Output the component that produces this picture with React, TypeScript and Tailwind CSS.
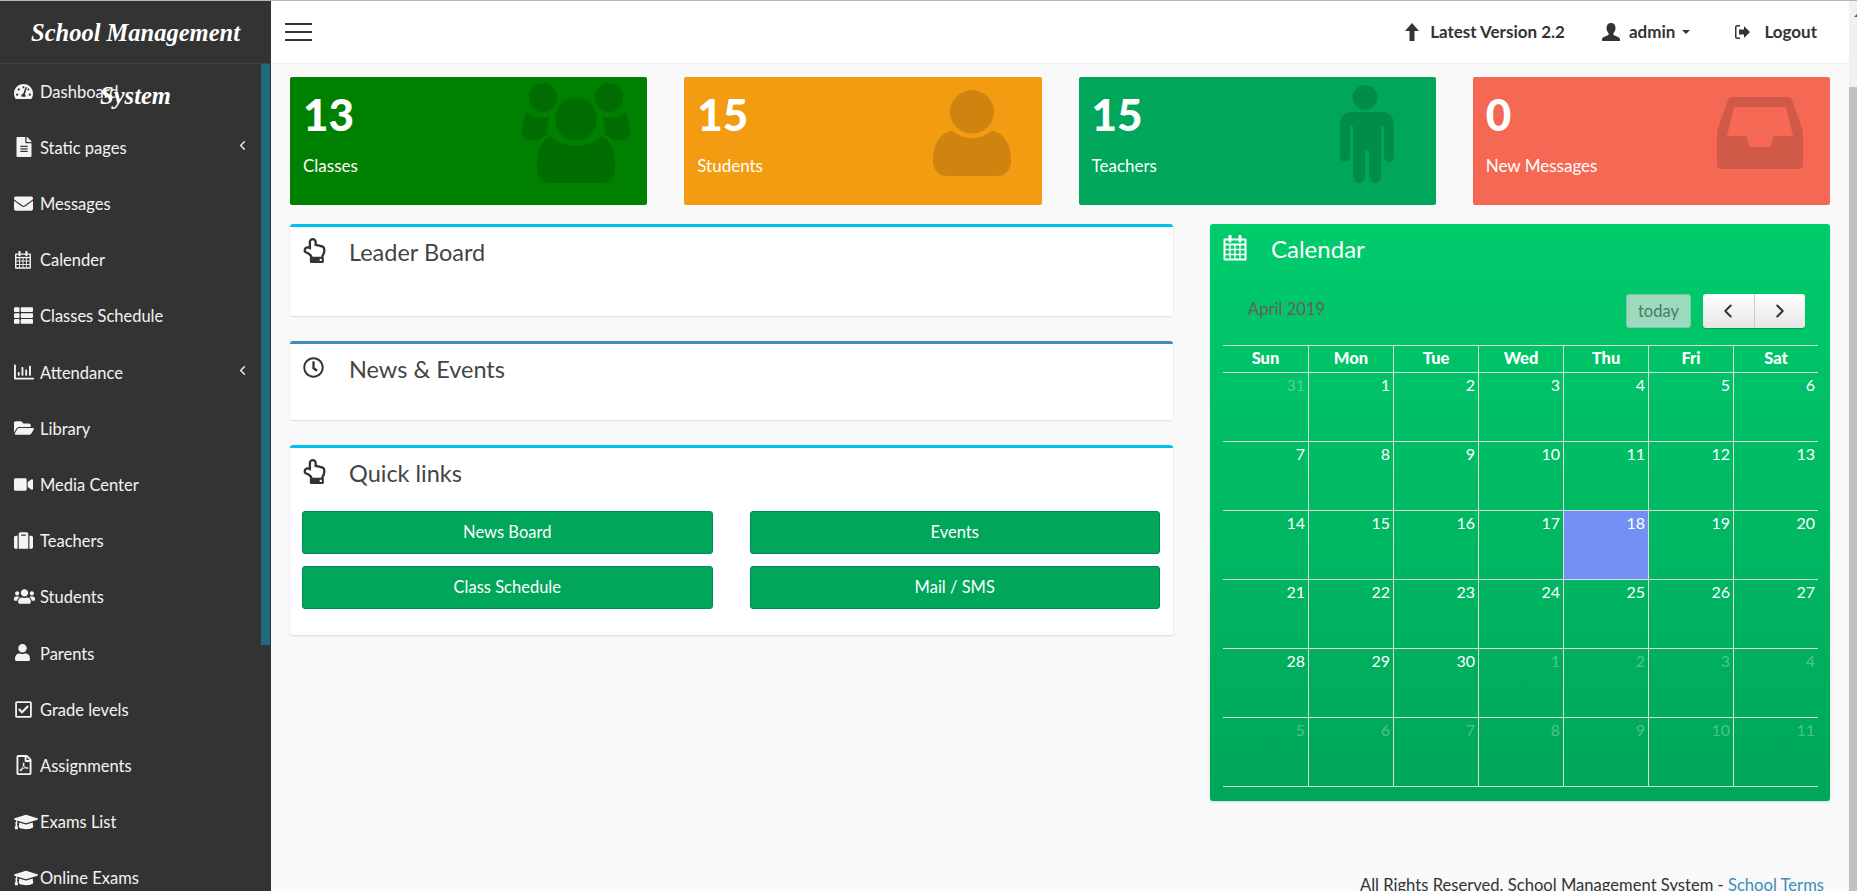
import {
  FaTachometerAlt,
  FaFileAlt,
  FaEnvelope,
  FaThList,
  FaRegChartBar,
  FaFolderOpen,
  FaVideo,
  FaSuitcase,
  FaUsers,
  FaUser,
  FaRegCheckSquare,
  FaRegFilePdf,
  FaGraduationCap,
  FaRegHandPointUp,
  FaRegClock,
} from "react-icons/fa";
import { ChevronLeft, ChevronRight } from "lucide-react";
import type { ComponentType, ReactNode } from "react";

function CalendarIcon({ className }: { className?: string }) {
  return (
    <svg viewBox="0 0 24 26" className={className} fill="none" stroke="currentColor">
      <path d="M1.500 4.500h21v20h-21z" strokeWidth="2" strokeLinejoin="round" />
      <path d="M1.500 9.500h21" strokeWidth="2" />
      <path d="M2 14.500h20M2 19.500h20M7 10v14M12 10v14M17 10v14" strokeWidth="1.300" />
      <path d="M7 1v5M17 1v5" strokeWidth="3" strokeLinecap="round" />
    </svg>
  );
}

const NAV: { label: string; icon: ComponentType<{ className?: string }>; size: string; arrow?: boolean }[] = [
  { label: "Dashboard", icon: FaTachometerAlt, size: "size-[19px]" },
  { label: "Static pages", icon: FaFileAlt, size: "size-[20px]", arrow: true },
  { label: "Messages", icon: FaEnvelope, size: "size-[19px]" },
  { label: "Calender", icon: CalendarIcon, size: "size-[18px]" },
  { label: "Classes Schedule", icon: FaThList, size: "size-[19px]" },
  { label: "Attendance", icon: FaRegChartBar, size: "size-[20px]", arrow: true },
  { label: "Library", icon: FaFolderOpen, size: "size-[20px]" },
  { label: "Media Center", icon: FaVideo, size: "size-[19px]" },
  { label: "Teachers", icon: FaSuitcase, size: "size-[19px]" },
  { label: "Students", icon: FaUsers, size: "size-[21px]" },
  { label: "Parents", icon: FaUser, size: "size-[17px]" },
  { label: "Grade levels", icon: FaRegCheckSquare, size: "size-[19px]" },
  { label: "Assignments", icon: FaRegFilePdf, size: "size-[20px]" },
  { label: "Exams List", icon: FaGraduationCap, size: "size-[24px]" },
  { label: "Online Exams", icon: FaGraduationCap, size: "size-[24px]" },
];

const WEEKS: [number, boolean][][] = [
  [[31, true], [1, false], [2, false], [3, false], [4, false], [5, false], [6, false]],
  [[7, false], [8, false], [9, false], [10, false], [11, false], [12, false], [13, false]],
  [[14, false], [15, false], [16, false], [17, false], [18, false], [19, false], [20, false]],
  [[21, false], [22, false], [23, false], [24, false], [25, false], [26, false], [27, false]],
  [[28, false], [29, false], [30, false], [1, true], [2, true], [3, true], [4, true]],
  [[5, true], [6, true], [7, true], [8, true], [9, true], [10, true], [11, true]],
];

function PeopleIcon() {
  return (
    <svg viewBox="0 0 108 100" className="mr-[17px] mt-[6px] h-[100px] w-[108px] fill-black/15">
      <ellipse cx="21" cy="14.500" rx="14" ry="14.500" />
      <ellipse cx="87" cy="14.500" rx="14" ry="14.500" />
      <path d="M5 29c5 4 10 6 16 6 3 0 6-1 8-1-3 3-4 7-4 11 0 3 0 5 2 7-5 1-8 2-10 5H7c-4 0-7-3-7-9 0-7 2-15 5-19z" />
      <path d="M103 29c-5 4-10 6-16 6-3 0-6-1-8-1 3 3 4 7 4 11 0 3 0 5-2 7 5 1 8 2 10 5h10c4 0 7-3 7-9 0-7-2-15-5-19z" />
      <ellipse cx="54" cy="36" rx="21" ry="21.500" />
      <path d="M29 54c7 6 15 9 25 9s18-3 25-9c9 1 14 14 14 30 0 9-4 16-12 16H27c-8 0-12-7-12-16 0-16 5-29 14-30z" />
    </svg>
  );
}

function PersonIcon() {
  return (
    <svg viewBox="0 0 78 130" preserveAspectRatio="none" className="mr-[31px] mt-[13px] h-[86px] w-[78px] fill-black/15">
      <ellipse cx="39" cy="33" rx="22" ry="33" />
      <path d="M20 62c6 7 12 11 19 11s13-4 19-11c12 1 20 18 20 45 0 12-4 23-14 23H14c-10 0-14-11-14-23 0-27 8-44 20-45z" />
    </svg>
  );
}

function ManIcon() {
  return (
    <svg viewBox="0 0 58 98" className="mr-[42px] mt-[8px] h-[98px] w-[58px] fill-black/15">
      <ellipse cx="29" cy="12.500" rx="12.500" ry="12.500" />
      <path d="M11 27h36c6 0 11 5 11 12v32c0 3-2 6-5 6s-5-3-5-6V41h-3v50c0 4-2 7-6 7s-6-3-6-7V66h-4v25c0 4-2 7-6 7s-6-3-6-7V41h-3v30c0 3-2 6-5 6s-5-3-5-6V39c0-7 5-12 11-12z" />
    </svg>
  );
}

function InboxIcon() {
  return (
    <svg viewBox="0 0 86 72" preserveAspectRatio="none" className="mr-[27px] mt-[20px] h-[72px] w-[86px] fill-black/15">
      <path
        fillRule="evenodd"
        d="M15 0h56c2 0 3 1 4 3l10 28c1 3 1 4 1 6v32c0 2-2 3-4 3H4c-2 0-4-1-4-3V37c0-2 0-3 1-6L11 3c1-2 2-3 4-3zm2 10L10 39h19l4 11h20l4-11h19L69 10z"
      />
    </svg>
  );
}

function StatCard({ value, label, color, icon }: { value: string; label: string; color: string; icon: ReactNode }) {
  return (
    <div className={`flex h-[128px] items-start justify-between rounded-[2px] pl-[13px] text-white ${color}`}>
      <div>
        <div className="mt-[12px] text-[44px] font-black leading-[50px]">{value}</div>
        <div className="mt-[15px] text-[17px] leading-[24px]">{label}</div>
      </div>
      {icon}
    </div>
  );
}

function Panel({ title, icon, color, children, height }: { title: string; icon: ReactNode; color: string; children?: ReactNode; height: string }) {
  return (
    <section className={`rounded-[3px] border-t-[3px] bg-white pl-[12px] pr-[13px] shadow-[0_1px_2px_rgba(0,0,0,0.12)] ${color} ${height}`}>
      <div className="flex h-[50px] items-center text-[#333]">
        <span className="flex w-[47px] -translate-y-[2px]">{icon}</span>
        <h3 className="text-[23.500px] leading-[30px] text-[#444]">{title}</h3>
      </div>
      {children}
    </section>
  );
}

function LinkButton({ label }: { label: string }) {
  return (
    <button className="h-[43px] rounded-[3px] border border-[#008d4c] bg-[#00a65a] text-[16.500px] text-white">{label}</button>
  );
}

export default function App() {
  return (
    <div className="flex h-[891px] w-[1857px] flex-col overflow-hidden bg-[#f9f9f9] font-['Lato','Noto_Sans',sans-serif] text-[16px]">
      <div className="h-px shrink-0 bg-[#b5b5b5]" />
      <div className="flex min-h-0 flex-1">
        {/* Sidebar */}
        <aside className="flex w-[271px] shrink-0 flex-col bg-[#333333] text-[#f4f4f4]">
          <div className="relative z-10 h-[63px] shrink-0 border-b border-[#444] px-[20px] text-center font-['Liberation_Serif',serif] text-[24.500px] font-bold italic leading-[63px] text-white">
            School Management System
          </div>
          <div className="flex min-h-0 flex-1">
            <nav className="min-w-0 flex-1">
              {NAV.map((item) => (
                <a key={item.label} className="flex h-[56.200px] items-center pl-[14px] pr-[11px] text-[16.500px]">
                  <span className="flex w-[26px] shrink-0 -translate-y-[1px]">
                    <item.icon className={`shrink-0 ${item.size}`} />
                  </span>
                  <span className="flex-1 whitespace-nowrap">{item.label}</span>
                  {item.arrow && <ChevronLeft className="size-[15px] -translate-y-[3px] text-[#e8e8e8]" strokeWidth={2.500} />}
                </a>
              ))}
            </nav>
            <div className="w-[10px] shrink-0 pr-px">
              <div className="h-[581px] bg-[#1f6a7f]" />
            </div>
          </div>
        </aside>

        <div className="flex min-w-0 flex-1 flex-col">
          {/* Top bar */}
          <header className="flex h-[63px] shrink-0 items-center justify-between border-b border-[#eee] bg-white pl-[14px] pr-[32px] text-[#333]">
            <div className="flex w-[27px] flex-col gap-[6px]">
              <span className="h-[2px] bg-[#333]" />
              <span className="h-[2px] bg-[#333]" />
              <span className="h-[2px] bg-[#333]" />
            </div>
            <div className="flex items-center text-[17px] font-bold">
              <svg viewBox="0 0 14 18" className="mr-[11px] h-[18px] w-[14px] fill-[#333]">
                <path d="M7 0l7 8H9.500v10h-5V8H0z" />
              </svg>
              <span>Latest Version 2.2</span>
              <svg viewBox="0 0 18 18" className="ml-[37px] mr-[9px] h-[18px] w-[18px] fill-[#333]">
                <path d="M9 0c3 0 4.500 2 4.500 5 0 2-1 4-2 5v2c2 1 6 2 6.500 4v2H0v-2c.5-2 4.500-3 6.500-4v-2c-1-1-2-3-2-5C4.500 2 6 0 9 0z" />
              </svg>
              <span>admin</span>
              <span className="ml-[7px] h-0 w-0 border-x-[4.500px] border-t-[4.500px] border-x-transparent border-t-[#333]" />
              <svg viewBox="0 0 16 14" className="ml-[44px] mr-[14px] h-[14px] w-[16px] fill-[#333]">
                <path d="M1 2c0-1 1-2 2-2h3v1.500H3c-.3 0-.5.2-.5.5v10c0 .3.2.5.5.5h3V14H3c-1 0-2-1-2-2zM5 4.500h5V1l6 6-6 6V9.500H5z" />
              </svg>
              <span>Logout</span>
            </div>
          </header>

          {/* Page content */}
          <main className="flex min-h-0 flex-1 flex-col px-[19px] pt-[13px]">
            <div className="grid grid-cols-4 gap-[37px]">
              <StatCard value="13" label="Classes" color="bg-[#008000]" icon={<PeopleIcon />} />
              <StatCard value="15" label="Students" color="bg-[#f39c12]" icon={<PersonIcon />} />
              <StatCard value="15" label="Teachers" color="bg-[#00a65a]" icon={<ManIcon />} />
              <StatCard value="0" label="New Messages" color="bg-[#f56954]" icon={<InboxIcon />} />
            </div>

            <div className="mt-[19px] flex gap-[37px]">
              <div className="flex w-[883px] shrink-0 flex-col gap-[25px]">
                <Panel title="Leader Board" icon={<FaRegHandPointUp className="size-[25px]" />} color="border-[#00c0ef]" height="h-[92px]" />
                <Panel title="News & Events" icon={<FaRegClock className="ml-px size-[21px]" />} color="border-[#3c8dbc]" height="h-[79px]" />
                <Panel title="Quick links" icon={<FaRegHandPointUp className="size-[25px]" />} color="border-[#00c0ef]" height="h-[190px]">
                  <div className="mt-[13px] grid grid-cols-2 gap-x-[37px] gap-y-[12px]">
                    <LinkButton label="News Board" />
                    <LinkButton label="Events" />
                    <LinkButton label="Class Schedule" />
                    <LinkButton label="Mail / SMS" />
                  </div>
                </Panel>
              </div>

              {/* Calendar */}
              <section className="h-[577px] flex-1 rounded-[3px] bg-gradient-to-b from-[#00cc6c] to-[#00a65a] pl-[13px] pr-[12px] text-white shadow-[0_1px_2px_rgba(0,0,0,0.15)]">
                <div className="flex h-[50px] items-center">
                  <CalendarIcon className="mr-[24px] h-[26px] w-[24px] -translate-y-[1px]" />
                  <h3 className="text-[24px] leading-[30px]">Calendar</h3>
                </div>
                <div className="mt-[20px] flex h-[34px] items-start pl-[25px] pr-[13px]">
                  <span className="flex-1 pt-[3px] text-[16.600px] leading-[24px] text-[#6e5a62]">April 2019</span>
                  <button className="h-[34px] w-[65px] rounded-[3px] border border-[#7ec9a3] bg-[#9adbbd] text-[16.500px] text-[#4e7866]">today</button>
                  <div className="ml-[12px] flex h-[34px] w-[102px] rounded-[3px] bg-gradient-to-b from-white to-[#e6e6e6] text-[#333] shadow-[0_1px_1px_rgba(0,0,0,0.2)]">
                    <span className="flex flex-1 items-center justify-center border-r border-[#ccc]">
                      <ChevronLeft className="size-[22px]" strokeWidth={2.200} />
                    </span>
                    <span className="flex flex-1 items-center justify-center">
                      <ChevronRight className="size-[22px]" strokeWidth={2.200} />
                    </span>
                  </div>
                </div>
                <div className="mt-[17px] grid grid-cols-7 border-t border-[#dddddd]">
                  {["Sun", "Mon", "Tue", "Wed", "Thu", "Fri", "Sat"].map((day, i) => (
                    <div key={day} className={`h-[27px] border-b border-[#dddddd] text-center text-[16.500px] font-black leading-[25px] ${i > 0 ? "border-l" : ""}`}>
                      {day}
                    </div>
                  ))}
                  {WEEKS.map((week, w) =>
                    week.map(([day, faded], i) => (
                      <div
                        key={`${w}-${i}`}
                        className={`h-[69px] border-b border-[#dddddd] pr-[3px] text-right text-[16px] leading-[24px] ${i > 0 ? "border-l" : ""} ${faded ? "text-white/30" : ""} ${w === 2 && i === 4 ? "bg-[#7590f5]" : ""}`}
                      >
                        {day}
                      </div>
                    )),
                  )}
                </div>
              </section>
            </div>

            <footer className="mt-[74px] whitespace-nowrap pr-[6px] text-right text-[16.600px] leading-[20px] text-[#333]">
              All Rights Reserved. School Management System - <a className="text-[#3c8dbc]">School Terms</a>
            </footer>
          </main>
        </div>

        {/* Page scrollbar */}
        <div className="flex w-[8px] shrink-0 flex-col bg-[#f1f1f1]">
          <div className="ml-[5px] mt-[12px] h-0 w-0 border-x-[4px] border-b-[4px] border-x-transparent border-b-[#555]" />
          <div className="mt-[70px] h-[804px] bg-[#c1c1c1]" />
        </div>
      </div>
    </div>
  );
}
